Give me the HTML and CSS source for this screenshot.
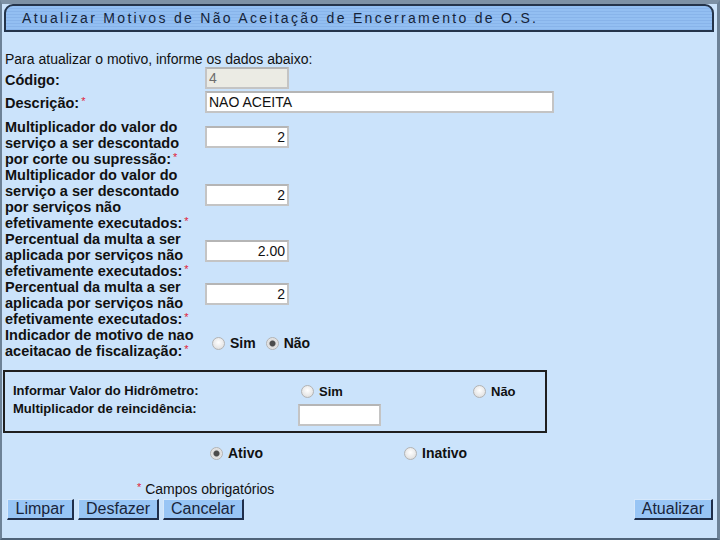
FILE: index.html
```html
<!DOCTYPE html>
<html lang="pt-BR">
<head>
  <meta charset="UTF-8" />
  <title>Atualizar Motivos de Não Aceitação de Encerramento de O.S.</title>
  <link rel="stylesheet" href="styles.css">
</head>
<body>

<div class="page">
  <div class="title-bar">Atualizar Motivos de Não Aceitação de Encerramento de O.S.</div>

  <p class="intro">Para atualizar o motivo, informe os dados abaixo:</p>

  <div class="form">
    <label class="lbl first">Código:</label>
    <div class="field"><input type="text" class="inp small" value="4" disabled></div>

    <label class="lbl">Descrição:<span class="req">*</span></label>
    <div class="field"><input type="text" class="inp wide" value="NAO ACEITA"></div>

    <label class="lbl">Multiplicador do valor do serviço a ser descontado por corte ou supressão:<span class="req">*</span></label>
    <div class="field"><input type="text" class="inp small num" value="2"></div>

    <label class="lbl">Multiplicador do valor do serviço a ser descontado por serviços não efetivamente executados:<span class="req">*</span></label>
    <div class="field"><input type="text" class="inp small num" value="2"></div>

    <label class="lbl">Percentual da multa a ser aplicada por serviços não efetivamente executados:<span class="req">*</span></label>
    <div class="field"><input type="text" class="inp small num" value="2.00"></div>

    <label class="lbl">Percentual da multa a ser aplicada por serviços não efetivamente executados:<span class="req">*</span></label>
    <div class="field up"><input type="text" class="inp small num" value="2"></div>

    <label class="lbl last">Indicador de motivo de nao aceitacao de fiscalização:<span class="req">*</span></label>
    <div class="field radios">
      <label class="opt"><input type="radio" name="fisc"> Sim</label>
      <label class="opt"><input type="radio" name="fisc" checked> Não</label>
    </div>
  </div>

  <div class="hidro-box">
    <span class="box-lbl">Informar Valor do Hidrômetro:</span>
    <label class="opt"><input type="radio" name="hidro"> Sim</label>
    <label class="opt"><input type="radio" name="hidro"> Não</label>

    <span class="box-lbl second">Multiplicador de reincidência:</span>
    <div><input type="text" class="inp small"></div>
    <span></span>
  </div>

  <div class="status">
    <label class="opt"><input type="radio" name="ativo" checked> Ativo</label>
    <label class="opt"><input type="radio" name="ativo"> Inativo</label>
  </div>

  <p class="required-note"><span class="req">*</span> Campos obrigatórios</p>

  <div class="buttons">
    <button class="btn">Limpar</button>
    <button class="btn">Desfazer</button>
    <button class="btn">Cancelar</button>
    <button class="btn right">Atualizar</button>
  </div>
</div>

</body>
</html>
```

FILE: styles.css
```css
* { box-sizing: border-box; margin: 0; padding: 0; }
body {
  background-color: #cbe3fb;
  font-family: "Liberation Sans", Arial, sans-serif;
  color: #111;
}
.page {
  width: 720px;
  height: 540px;
  border-top: 4px solid #7d91a5;
  border-left: 2px solid #6d8297;
  border-right: 3px solid #6d8297;
  border-bottom: 2px solid #4f6378;
  background-color: #cbe3fb;
  overflow: hidden;
}
.title-bar {
  margin: 0 3px 0 2px;
  height: 28px;
  border: 2px solid #24344a;
  border-radius: 9px 9px 0 0;
  background: repeating-linear-gradient(#93bff2 0, #93bff2 2px, #88b4ea 2px, #88b4ea 3px);
  color: #15243a;
  font-size: 14px;
  letter-spacing: 2.3px;
  line-height: 24px;
  padding-left: 16px;
}
.intro {
  font-size: 14px;
  line-height: 16px;
  margin: 19px 0 0 3px;
}
.form {
  display: grid;
  grid-template-columns: 200px 1fr;
  margin-left: 3px;
}
.lbl {
  font-size: 14.5px;
  font-weight: bold;
  line-height: 16px;
  padding-right: 4px;
  align-self: center;
}
.req {
  color: #e0223a;
  font-size: 11px;
  font-weight: normal;
  line-height: 1;
  vertical-align: 3px;
  margin-left: 2px;
}
.field {
  display: flex;
  align-items: center;
  padding-bottom: 8px;
}
.form > .lbl.first { align-self: start; padding-top: 5px; }
.form > .lbl:nth-child(3) { padding-top: 2px; }
.form > .field:nth-child(2) { padding: 0 0 1px; }
.form > .field:nth-child(4) { padding: 1px 0 1px; }
.form > .lbl:nth-child(5) { padding-top: 5px; }
.form > .lbl.last { align-self: start; }
.field.up { padding-bottom: 18px; }
.inp {
  height: 22px;
  border: 2px solid #c4c4c4;
  border-top-color: #b5b5b5;
  background: #fff;
  font-family: "Liberation Sans", Arial, sans-serif;
  font-size: 14px;
  color: #111;
  padding: 0 2px;
}
.inp.small { width: 84px; }
.inp.wide { width: 349px; }
.inp.num { text-align: right; }
.inp:disabled {
  background: #ebebe4;
  color: #6d6d6d;
}
.radios {
  padding: 0 0 0 7px;
  gap: 10px;
}
.opt {
  font-size: 14px;
  font-weight: bold;
  display: inline-flex;
  align-items: center;
  gap: 5px;
}
input[type="radio"] {
  appearance: none;
  width: 13px;
  height: 13px;
  border: 1px solid #b3b3b3;
  border-radius: 50%;
  background: radial-gradient(circle at 50% 40%, #ffffff 0, #e8e8e8 60%, #d4d4d4 100%);
  margin: 0;
}
input[type="radio"]:checked {
  background: radial-gradient(circle, #4c4c4c 0, #4c4c4c 2.5px, #dcdcdc 3.5px, #f2f2f2 100%);
}
.hidro-box {
  display: grid;
  grid-template-columns: 285px 172px 1fr;
  align-content: start;
  align-items: center;
  margin: 11px 0 0 1px;
  width: 544px;
  height: 63px;
  border: 2px solid #1f1f1f;
  padding: 10px 0 0 8px;
}
.box-lbl {
  font-size: 13px;
  font-weight: bold;
  line-height: 18px;
}
.box-lbl.second { align-self: start; }
.hidro-box .opt { font-size: 13px; padding-left: 3px; }
.hidro-box .inp { height: 22px; margin-top: 4px; width: 83px; }
.status {
  display: flex;
  margin: 12px 0 0 208px;
  gap: 120px;
}
.status .opt { width: 74px; }
.required-note {
  font-size: 14px;
  line-height: 16px;
  margin: 20px 0 0 133px;
}
.buttons {
  display: flex;
  gap: 4px;
  margin: 2px 0 0 5px;
  padding-right: 4px;
}
.btn {
  min-width: 67px;
  height: 21px;
  padding: 0 7px;
  background: #98c5f5;
  border: 1px solid #d6e8fb;
  border-right: 2px solid #1f2e4a;
  border-bottom: 2px solid #1f2e4a;
  font-family: "Liberation Sans", Arial, sans-serif;
  font-size: 16px;
  line-height: 16px;
  color: #18243a;
  cursor: pointer;
}
.btn.right { margin-left: auto; }
```
